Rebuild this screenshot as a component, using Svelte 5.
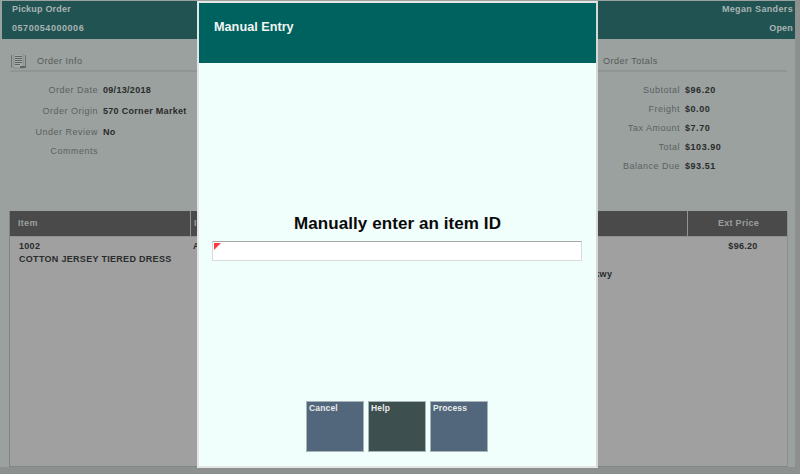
<script>
  const info = [
    ['Order Date', '09/13/2018'],
    ['Order Origin', '570 Corner Market'],
    ['Under Review', 'No'],
    ['Comments', '']
  ];
  const totals = [
    ['Subtotal', '$96.20'],
    ['Freight', '$0.00'],
    ['Tax Amount', '$7.70'],
    ['Total', '$103.90'],
    ['Balance Due', '$93.51']
  ];
</script>

<div class="page">
  <header class="top">
    <div class="top-row"><span>Pickup Order</span><span class="name">Megan Sanders</span></div>
    <div class="top-row"><span class="num">0570054000006</span><span>Open</span></div>
  </header>

  <section class="panels">
    <div class="panel left">
      <div class="panel-title">
        <svg class="doc" width="15" height="15" viewBox="0 0 15 15">
          <path d="M0.5 1V14M14.500 1V14" stroke="#6d7371" fill="none" />
          <rect x="3" y="0" width="9" height="14" fill="#a5aba9" stroke="#727876" stroke-width="0.5" />
          <path d="M4 2.500H11M4 4.500H11M4 6.500H11M4 8.500H11M4 10.500H9" stroke="#5d6462" />
          <rect x="9" y="12" width="5" height="2" fill="#5d6462" />
        </svg>
        <span>Order Info</span>
      </div>
      <div class="rows info">
        {#each info as [k, v]}
          <div class="row"><span class="k">{k}</span><b class="v">{v}</b></div>
        {/each}
      </div>
    </div>
    <div class="panel right">
      <div class="panel-title">
        <svg class="doc doc-r" width="15" height="15" viewBox="0 0 15 15">
          <path d="M14.500 1V14" stroke="#5d6462" fill="none" />
        </svg>
        <span>Order Totals</span>
      </div>
      <div class="rows totals">
        {#each totals as [k, v]}
          <div class="row"><span class="k">{k}</span><b class="v">{v}</b></div>
        {/each}
      </div>
    </div>
  </section>

  <section class="table">
    <div class="thead">
      <div class="th c1">Item</div>
      <div class="th c2">Item</div>
      <div class="th c3">Ext Price</div>
    </div>
    <div class="tbody">
      <div class="td c1"><b>1002</b><b class="desc">COTTON JERSEY TIERED DRESS</b></div>
      <div class="td c2"><b>A</b><b class="addr">Pkwy</b></div>
      <div class="td c3"><b>$96.20</b></div>
    </div>
  </section>
</div>

<div class="modal">
  <div class="modal-head">Manual Entry</div>
  <div class="modal-body">
    <h1>Manually enter an item ID</h1>
    <div class="entry"><span class="flag"></span></div>
    <div class="buttons">
      <button class="blue">Cancel</button>
      <button class="dark">Help</button>
      <button class="blue">Process</button>
    </div>
  </div>
</div>

<style>
  :global(body) {
    margin: 0;
    background: #8c908e;
    font-family: "Liberation Sans", Arial, sans-serif;
    overflow: hidden;
  }
  .page {
    width: 795px;
    height: 467px;
    box-sizing: border-box;
    padding-top: 1px;
    padding-left: 2px;
    background: #9aa19f;
    display: flex;
    flex-direction: column;
    font-size: 9px;
    letter-spacing: 0.3px;
    font-weight: bold;
  }
  .top {
    height: 38px;
    width: 793px;
    background: #215352;
    color: #a9b4b2;
    box-sizing: border-box;
    padding: 3px 2px 0 10px;
    display: flex;
    flex-direction: column;
    gap: 8px;
    letter-spacing: 0.2px;
  }
  .top-row {
    display: flex;
    justify-content: space-between;
    height: 11px;
    line-height: 11px;
  }
  .num { letter-spacing: 0.55px; }
  .name { letter-spacing: 0.35px; }
  .panels {
    display: flex;
    height: 172px;
  }
  .panel { position: relative; }
  .left { width: 196px; padding-left: 8px; box-sizing: border-box; }
  .right { margin-left: 399px; width: 190px; }
  .panel-title {
    height: 33px;
    box-sizing: border-box;
    padding-top: 16px;
    display: flex;
    align-items: flex-start;
    color: #545b59;
    font-weight: normal;
    line-height: 12px;
    letter-spacing: 0.5px;
    border-bottom: 2px solid #8f9694;
  }
  .doc { margin: -1px 11px 0 1px; }
  .doc-r { margin: -1px 5px 0 -14px; }
  .rows { display: flex; flex-direction: column; }
  .info { padding-top: 12px; gap: 9px; }
  .totals { padding-top: 12px; gap: 7px; }
  .row { display: flex; height: 12px; line-height: 12px; }
  .info .row:last-child { margin-top: -2px; }
  .k { color: #5a615f; font-weight: normal; text-align: right; white-space: nowrap; letter-spacing: 0.5px; }
  .v { color: #2a2c2c; white-space: nowrap; margin-left: 5px; }
  .totals .v { letter-spacing: 0.55px; }
  .info .k { width: 88px; }
  .totals .k { width: 83px; }
  .table {
    margin-left: 7px;
    width: 779px;
    height: 256px;
    box-sizing: border-box;
    border-right: 1px solid #8a908e;
    border-bottom: 1px solid #7f8786;
    border-left: 1px solid #7f8786;
    background: #a0a0a0;
  }
  .thead {
    display: flex;
    height: 25px;
    background: #4a4a4a;
    color: #9a9f9e;
    line-height: 25px;
    border-bottom: 1px solid #8f9392;
  }
  .tbody { display: flex; color: #2a2c2c; }
  .c1 { width: 180px; padding-left: 8px; box-sizing: border-box; }
  .c2 { width: 497px; padding-left: 3px; box-sizing: border-box; }
  .c3 { width: 100px; padding-left: 2px; text-align: center; box-sizing: border-box; }
  .th + .th { border-left: 1px solid #8f9392; }
  .td { padding-top: 2px; line-height: 14px; }
  .td b { display: block; }
  .td.c1 { padding-left: 9px; }
  .td.c3 { padding-left: 12px; }
  .desc { margin-top: -1px; }
  .addr { margin-top: 14px; margin-left: 395px; white-space: nowrap; }
  .modal {
    position: absolute;
    left: 197px;
    top: 1px;
    width: 401px;
    height: 467px;
    box-sizing: border-box;
    border: 2px solid #e3e6e5;
    border-right-color: #d5d8d7;
    background: #f0fffb;
    display: flex;
    flex-direction: column;
  }
  .modal-head {
    height: 60px;
    flex: none;
    background: #00625e;
    color: #f1f5f4;
    font-size: 12.700px;
    font-weight: bold;
    line-height: 16px;
    padding: 16px 0 0 15px;
    box-sizing: border-box;
  }
  .modal-body {
    flex: 1;
    display: flex;
    flex-direction: column;
    align-items: center;
    padding-top: 151px;
  }
  h1 {
    margin: 0;
    font-size: 17px;
    font-weight: bold;
    line-height: 20px;
    color: #0a0a0a;
    letter-spacing: 0.08px;
  }
  .entry {
    position: relative;
    width: 370px;
    height: 20px;
    margin-top: 7px;
    margin-right: 2px;
    box-sizing: border-box;
    background: #fff;
    border: 1px solid #d8dbda;
    border-top: 1px solid #a5a8a7;
  }
  .flag {
    position: absolute;
    left: 1px;
    top: 1px;
    width: 0;
    height: 0;
    border-top: 7px solid #ff3b40;
    border-right: 7px solid transparent;
  }
  .buttons {
    display: flex;
    gap: 4px;
    margin-top: 140px;
    margin-right: 1px;
  }
  button {
    width: 58px;
    height: 51px;
    box-sizing: border-box;
    border: 1px solid #a8b5b8;
    padding: 1px 2px;
    text-align: left;
    display: flex;
    align-items: flex-start;
    color: #e8ecec;
    font: bold 8.500px/11px "Liberation Sans", Arial, sans-serif;
    letter-spacing: 0.15px;
  }
  .blue { background: #52677c; }
  .dark { background: #3e4f50; }
</style>
